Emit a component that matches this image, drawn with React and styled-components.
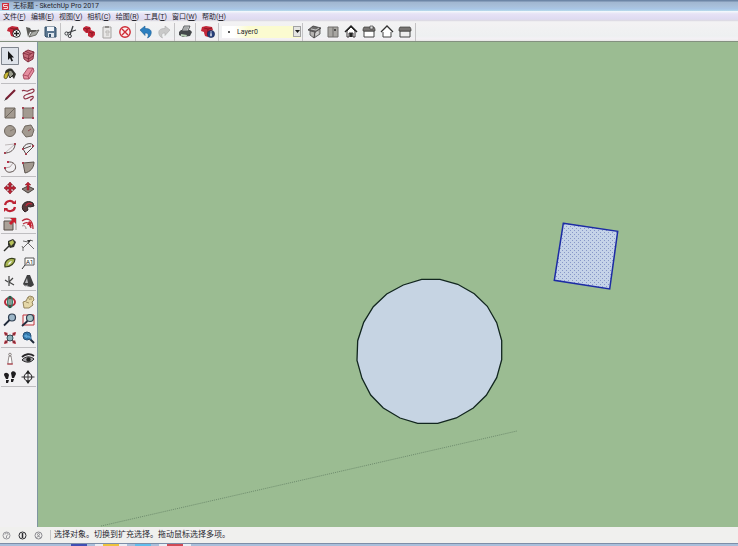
import React from "react";
import styled, { createGlobalStyle } from "styled-components";

const GlobalStyle = createGlobalStyle`
  * {
    box-sizing: border-box;
  }
  body {
    margin: 0;
    overflow: hidden;
    font-family: Roboto, "Noto Sans CJK SC", sans-serif;
    color: #26262e;
  }
  button, select {
    font: inherit;
    color: inherit;
    border: 0;
    padding: 0;
    margin: 0;
    background: none;
  }
`;

const red = "#c4283a";
const dark = "#3a3638";
const taupe = "#a39a90";

const icons = {
  // file toolbar
  newFile: (
    <>
      <path d="M3 5l4-2 6 1 1 3-4 2-1 5-3-1-1-4-3-1z" fill={red} />
      <path d="M5 5l4 1 4-1M9 6l-1 7" stroke="#7d1420" fill="none" strokeWidth=".8" />
      <path d="M5 8h3v5l-2-1z" fill={red} />
      <circle cx="11.500" cy="10.500" r="3.800" fill="#fff" stroke="#222" />
      <path d="M11.500 8v5M9 10.500h5" stroke="#222" strokeWidth="1.400" />
    </>
  ),
  open: (
    <>
      <path d="M3 4l4 1 1 2 5 0v2H7l-2 5z" fill="#5c5c58" />
      <path d="M6 14l3-5 7-2-3 5z" fill="#a9aba6" stroke="#55564f" strokeWidth=".8" />
    </>
  ),
  save: (
    <>
      <path d="M4 4h10l1 1v9H5l-1-1z" fill="#5b7690" stroke="#34506b" />
      <path d="M6 4h7v4H6z" fill="#f2f6fa" />
      <path d="M7 10h6v4H7z" fill="#dfe7ee" />
      <path d="M8 11h2v3H8z" fill="#34506b" />
    </>
  ),
  cut: (
    <>
      <path d="M11 3L8 12M14 7L5 10" stroke="#3f4246" strokeWidth="1.300" fill="none" />
      <circle cx="4.500" cy="10.500" r="1.600" fill="none" stroke="#3f4246" />
      <circle cx="7.800" cy="13" r="1.600" fill="none" stroke="#3f4246" />
    </>
  ),
  copy: (
    <>
      <path d="M3 5l3-2 4 1 1 2-2 4-3 0-3-3z" fill={red} />
      <path d="M8 8l3-1 4 2 0 3-3 3-4-2z" fill={red} />
      <path d="M4 5l3 1 3-1M7 6v3M9 9l3 1 2-1M12 10v3" stroke="#7d1420" strokeWidth=".8" fill="none" />
    </>
  ),
  paste: (
    <>
      <path d="M5 4h8v11H5z" fill="#e8e7e6" stroke="#a5a3a1" />
      <path d="M7 3h4v2H7z" fill="#8f8d8b" />
      <path d="M8 8h3v2H8zM8 12h3" fill="none" stroke="#b9b7b4" />
    </>
  ),
  erase: (
    <>
      <circle cx="9" cy="9" r="5.200" fill="#fbeeee" stroke="#cf2b35" strokeWidth="1.400" />
      <path d="M6 6l6 6M12 6l-6 6" stroke="#cf2b35" strokeWidth="1.400" />
    </>
  ),
  undo: <path d="M3 7l5-4v2.500c5 0 7 2 6 5.500-.5 2-1.500 3-3.500 4 1.500-3 1-5-2.500-5v2.500z" fill="#2c7fc0" stroke="#1f5f96" strokeWidth=".6" />,
  redo: <path d="M15 7l-5-4v2.500c-5 0-7 2-6 5.500.5 2 1.500 3 3.500 4-1.500-3-1-5 2.500-5v2.500z" fill="#c9c9c9" stroke="#adadad" strokeWidth=".6" />,
  print: (
    <>
      <path d="M3 9l2-2h9l2 2-2 4-7 1-4-2z" fill="#44474a" />
      <path d="M6 8l2-5h6l-2 5z" fill="#c9cbcb" stroke="#45484a" strokeWidth=".8" />
      <path d="M5 11l6 1-1 2-5-1z" fill="#b9d0b6" />
      <path d="M8 5h4M7 7h4" stroke="#66696b" strokeWidth=".7" />
    </>
  ),
  modelInfo: (
    <>
      <path d="M3 4l4-1 6 1 1 3-4 2-1 5-3-1-1-4-3-1z" fill={red} />
      <path d="M5 5l4 1 4-1M9 6l-1 7" stroke="#7d1420" fill="none" strokeWidth=".8" />
      <path d="M5 8h3v5l-2-1z" fill={red} />
      <circle cx="12" cy="11" r="3.600" fill="#273f7c" stroke="#15254f" strokeWidth=".6" />
      <path d="M12 8.500v1M12 10.300v3" stroke="#fff" strokeWidth="1.300" />
    </>
  ),
  // views
  iso: (
    <>
      <path d="M2 7l5-4 8 2-5 4z" fill="#6d6c6b" stroke="#3d3c3c" strokeWidth=".8" />
      <path d="M4 8v4l4 3 1-6zM9 9l-1 6 6-4V6z" fill="#b6b4b2" stroke="#4a4949" strokeWidth=".8" />
      <path d="M5 6l5 1 3-2M10 10l2-1v2l-2 1z" stroke="#ddd" strokeWidth=".8" fill="none" />
    </>
  ),
  top: (
    <>
      <path d="M4 4h10v10H4z" fill="#a8a6a2" stroke="#716f6c" />
      <path d="M9 4v10" stroke="#716f6c" />
      <path d="M10 6h2v2h-2z" fill="#4f4e4c" />
    </>
  ),
  front: (
    <>
      <path d="M5 8l4-4 4 4v6h-2v-4H7v4H5z" fill="#fff" stroke={dark} />
      <path d="M3 9l6-6 6 6" stroke="#222" strokeWidth="1.500" fill="none" />
      <path d="M7.500 10h3v4h-3z" fill="#222" />
    </>
  ),
  right: (
    <>
      <path d="M4 8h10v6H4z" fill="#fff" stroke="#444" />
      <path d="M3 6l1-2h10l1 2v2H3z" fill="#777472" stroke="#403f3e" strokeWidth=".7" />
      <path d="M10 3h3v3h-3z" fill="#ddd" stroke="#444" strokeWidth=".7" />
    </>
  ),
  back: (
    <>
      <path d="M5 8v6h8V8" fill="#fff" stroke="#444" />
      <path d="M3 9l6-6 6 6" stroke="#333" strokeWidth="1.300" fill="#fff" />
    </>
  ),
  left: (
    <>
      <path d="M4 8h10v6H4z" fill="#eee" stroke="#444" />
      <path d="M3 6l1-2h10l1 2v2H3z" fill="#777472" stroke="#403f3e" strokeWidth=".7" />
    </>
  ),
  // drawing tools
  select: <path d="M7 4v9l2-2 1.500 3.500 1.500-.7-1.500-3.300h2.500z" fill="#151515" />,
  component: (
    <>
      <path d="M4 6l5-3 6 2-1 7-5 3-4-3z" fill="#c46a78" stroke="#7c2738" strokeWidth=".9" />
      <path d="M4 6l6 2 5-3M10 8l-1 7M6 4l6 3M5 10l5 2 4-3" stroke="#7c2738" strokeWidth=".8" fill="none" />
    </>
  ),
  paint: (
    <>
      <path d="M4 8c0-4 6-6 8-3l3 4-2 5-3-4z" fill="#35352f" />
      <path d="M6 7l4-2 3 4-4 4z" fill="#9a9c8d" stroke="#272722" />
      <path d="M3 12c0-3 2-5 5-5L6 13c-1 1-3 1-3-1z" fill="#cdbb36" stroke="#4b4613" strokeWidth=".8" />
    </>
  ),
  eraser: (
    <>
      <path d="M4 10l5-7h5l1 3-5 8-5 0z" fill="#e58ea0" stroke="#a34459" strokeWidth=".9" />
      <path d="M4 10l5 1 5-8M9 11l1 3" stroke="#a34459" strokeWidth=".8" fill="none" />
    </>
  ),
  line: (
    <>
      <path d="M5 13l9-9" stroke="#7a1f33" strokeWidth="2.200" />
      <path d="M3 15l2-3 1 1z" fill="#222" />
    </>
  ),
  freehand: <path d="M3 5c2-2 4 1 6 0s5-3 6-1-3 3-6 4-5 2-4 4 4 0 6-1 4-1 3 1-3 1-2 3" stroke="#8e2f43" strokeWidth="1.200" fill="none" />,
  rectangle: (
    <>
      <path d="M4 4h10v10H4z" fill={taupe} stroke="#6f675f" />
      <path d="M4 14L14 4" stroke="#6f675f" />
    </>
  ),
  rotatedRect: (
    <>
      <path d="M4 4h10v10H4z" fill={taupe} stroke="#7c716a" />
      <path d="M3 3h2v2H3zM13 3h2v2h-2zM3 13h2v2H3zM13 13h2v2h-2z" fill="#a44352" />
    </>
  ),
  circle: (
    <>
      <circle cx="9" cy="9" r="5.500" fill={taupe} stroke="#6f675f" />
      <path d="M9 9l4-2" stroke="#7f766d" />
    </>
  ),
  polygon: (
    <>
      <path d="M6 4l6-1 3 5-2 6-6 1-4-5z" fill={taupe} stroke="#6f675f" />
      <path d="M9 9l3-2" stroke="#8c4a50" />
    </>
  ),
  arc: (
    <>
      <path d="M4 13C9 13 14 10 14 4" stroke="#5f5350" fill="none" />
      <path d="M4 13L14 4M4 5l9-1" stroke="#a9a1a0" fill="none" strokeWidth=".7" />
      <path d="M3 12h2v2H3zM13 3h2v2h-2z" fill="#a44352" />
    </>
  ),
  arc2: (
    <>
      <path d="M4 9c1-6 9-7 11-3M4 9l3 5 8-8M4 9l8-3" stroke="#544b4a" fill="none" />
      <path d="M3 8h2v2H3zM6 13h2v2H6zM13 5h2v2h-2z" fill="#a44352" />
    </>
  ),
  arc3: (
    <>
      <path d="M7 4c9-1 10 9 3 10-3 1-6-1-6-4" stroke="#5f5350" fill="none" />
      <path d="M4 10l5-1 3-4" stroke="#b3a6a6" fill="none" />
      <path d="M3 9h2v2H3zM6 3h2v2H6z" fill="#b5344b" />
    </>
  ),
  pie: (
    <>
      <path d="M4 5l11-1c0 6-4 10-9 11z" fill={taupe} stroke="#5b534d" />
      <path d="M3 4h2v2H3z" fill="#a44352" />
    </>
  ),
  // edit tools
  move: (
    <path d="M9 3l2.500 3h-1.500v2h2V6.500l3 2.500-3 2.500V10h-2v2h1.500L9 15l-2.500-3H8v-2H6v1.500L3 9l3-2.500V8h2V6H6.500z" fill="#bd2334" stroke="#7c1422" strokeWidth=".6" />
  ),
  pushPull: (
    <>
      <path d="M3 10l6-3 6 3-6 4z" fill="#8b7f79" stroke="#4c4340" />
      <path d="M9 3l3 3h-2v5H8V6H6z" fill="#bd2334" stroke="#7c1422" strokeWidth=".4" />
    </>
  ),
  rotate: (
    <>
      <path d="M4 8c1-5 7-5 9-2M14 10c-1 5-7 5-9 2" stroke="#bd2334" strokeWidth="2.200" fill="none" />
      <path d="M11 7h4V3zM7 11H3v4z" fill="#bd2334" />
    </>
  ),
  followMe: (
    <>
      <path d="M4 13c-3-6 4-11 10-7l1 3-4 1c-2-1-3 0-2 3l-3 2z" fill="#553a3c" stroke="#2f2022" />
      <path d="M7 9c1-3 4-3 6-2" stroke="#c0273b" strokeWidth="1.300" fill="none" />
    </>
  ),
  scale: (
    <>
      <path d="M3 6h9v9H3z" fill="#aba298" stroke="#574f49" />
      <path d="M3 3h12v12" stroke="#8f8580" fill="none" strokeWidth=".8" />
      <path d="M9 3h6v6l-2-2-3 3-2-2 3-3z" fill="#c8202f" />
    </>
  ),
  offset: (
    <>
      <path d="M3 6c5-4 11-2 11 8M4 9c4-3 7-1 8 4" stroke="#b92b3b" strokeWidth="1.300" fill="none" />
      <path d="M8 10l2-4 3 2-1 1 1 2-2 1-1-2z" fill="#c8202f" />
      <path d="M3 11c2-1 4 0 4 3" stroke="#9b8985" fill="none" />
    </>
  ),
  // construction tools
  tape: (
    <>
      <path d="M7 5l5-2 3 3-2 5-4 1-2-3z" fill="#33352c" />
      <path d="M8 6l4-2 1 3-3 3z" fill="#b8c25a" />
      <path d="M8 10l-5 5" stroke="#2d2d28" strokeWidth="1.400" />
    </>
  ),
  dimension: (
    <>
      <path d="M4 12l7-7M4 5l5 1M9 7l6 6M11 4l3 1M4 12v3M4 12l-1-2" stroke="#5c5c5c" fill="none" strokeWidth=".9" />
      <path d="M8 4l4 0-2 3z" fill="#333" />
    </>
  ),
  protractor: (
    <>
      <path d="M4 13C3 7 8 3 14 5c0 4-4 8-10 8z" fill="#a9b653" stroke="#39401d" strokeWidth="1.200" />
      <path d="M7 11c0-2 2-4 4-4-1 2-2 3-4 4z" fill="#f2f1f2" />
    </>
  ),
  textTool: (
    <>
      <path d="M6 4h9v7H6z" fill="#fff" stroke="#555" />
      <path d="M6 11l-3 4" stroke="#333" />
      <text x="7" y="10" fontSize="6" fill="#222">A1</text>
    </>
  ),
  axes: <path d="M8 4v10M8 10l4-4M8 10l5 3M4 8l3 2" stroke="#454545" strokeWidth="1.200" fill="none" />,
  text3d: (
    <>
      <path d="M8 3l3 0 4 10-3 2-5-1-3-2z" fill="#3f3f41" />
      <path d="M8 6l1 5H6z" fill="#b7b7ba" />
      <path d="M4 12l2 2 3-1" stroke="#8b8b8e" fill="none" />
    </>
  ),
  // camera tools
  orbit: (
    <>
      <ellipse cx="9" cy="9" rx="5" ry="4" fill="none" stroke="#b82939" strokeWidth="2" />
      <ellipse cx="9" cy="9" rx="2.200" ry="5.500" fill="none" stroke="#2a735d" strokeWidth="1.500" />
      <path d="M9 3v12" stroke="#263e34" />
    </>
  ),
  pan: (
    <>
      <path d="M4 9l3-1 2-4 2-1 3 1 1 3-2 2 1 3-4 3-5 0z" fill="#e5d7a8" stroke="#8b7b52" strokeWidth=".9" />
      <path d="M9 4l2 3M12 4l0 3M7 9l3 1" stroke="#8b7b52" strokeWidth=".7" fill="none" />
    </>
  ),
  zoom: (
    <>
      <circle cx="11" cy="6.500" r="3.500" fill="#9db6c8" stroke="#2f3e51" strokeWidth="1.200" />
      <path d="M8.500 9L3 14.500" stroke="#20293a" strokeWidth="1.800" />
    </>
  ),
  zoomWindow: (
    <>
      <path d="M4 4h11v10H4z" fill="#f8f1f1" stroke="#c1343c" />
      <circle cx="11" cy="7" r="3.500" fill="#a7c5c6" stroke="#2f3e51" strokeWidth="1.200" />
      <path d="M8.500 10L3 15" stroke="#20293a" strokeWidth="1.800" />
    </>
  ),
  zoomExtents: (
    <>
      <path d="M3 3l4 1-3 3zM15 3l-4 1 3 3zM3 15l4-1-3-3zM15 15l-4-1 3-3z" fill="#bd2334" />
      <path d="M4 4l10 10M14 4L4 14" stroke="#813039" strokeWidth="1.500" />
      <circle cx="9" cy="9" r="3" fill="#8fb1b9" stroke="#2f4f5b" />
    </>
  ),
  previous: (
    <>
      <circle cx="8" cy="7" r="4" fill="#3a82b6" stroke="#244e74" />
      <path d="M11 10l4 4" stroke="#20293a" strokeWidth="2" />
      <path d="M4 7l4-3v2c3 0 5 2 4 5-1-2-2-2-4-2v1z" fill="#5ba4d6" stroke="#1e578c" strokeWidth=".6" />
    </>
  ),
  // walkthrough tools
  positionCamera: (
    <>
      <path d="M8 6l-1 6v2h4v-2l-1-6z" fill="#fff" stroke="#77706e" strokeWidth=".8" />
      <circle cx="9" cy="4.500" r="1.300" fill="#eee" stroke="#77706e" strokeWidth=".8" />
      <path d="M6 14h6" stroke="#b6303d" />
    </>
  ),
  lookAround: (
    <>
      <path d="M3 7c3-3 8-4 12-1" stroke="#272528" strokeWidth="1.800" fill="none" />
      <path d="M3 10c3-4 9-4 12-1-3 4-8 4-12 1z" fill="#a5a4a8" stroke="#272528" />
      <circle cx="9.500" cy="9.500" r="2.200" fill="#222" />
    </>
  ),
  walk: (
    <>
      <path d="M3 7c0-3 4-3 5 0l-1 4H5zM5 12h3l-1 3H5z" fill="#1f1d20" />
      <path d="M10 5c1-3 5-2 5 1l-2 4h-2zM10 11h3l-1 3h-2z" fill="#1f1d20" />
    </>
  ),
  section: (
    <>
      <circle cx="9" cy="9" r="3.800" fill="#f4f4f5" stroke="#343235" strokeWidth="1.200" />
      <path d="M2.500 9h13M9 3v12" stroke="#343235" />
      <path d="M7 5l2-3 2 3zM7 13l2 3 2-3z" fill="#222" />
    </>
  ),
};

const menus = [
  ["文件", "F"],
  ["编辑", "E"],
  ["视图", "V"],
  ["相机", "C"],
  ["绘图", "R"],
  ["工具", "T"],
  ["窗口", "W"],
  ["帮助", "H"],
];

const toolbarGroups = [
  ["newFile", "open", "save"],
  ["cut", "copy", "paste", "erase"],
  ["undo", "redo"],
  ["print"],
  ["modelInfo"],
];

const views = ["iso", "top", "front", "right", "back", "left"];

const toolGroups = [
  ["select", "component", "paint", "eraser"],
  ["line", "freehand", "rectangle", "rotatedRect", "circle", "polygon", "arc", "arc2", "arc3", "pie"],
  ["move", "pushPull", "rotate", "followMe", "scale", "offset"],
  ["tape", "dimension", "protractor", "textTool", "axes", "text3d"],
  ["orbit", "pan", "zoom", "zoomWindow", "zoomExtents", "previous"],
  ["positionCamera", "lookAround", "walk", "section"],
];

const circlePoints =
  "383.7,237.3 402,237.3 419.7,242.3 436.3,251.7 449.3,264.3 458.7,280.7 463.7,298.7 463.7,317.7 " +
  "458.7,335.7 448.3,353.3 435.3,366 418.3,376 399.7,381.3 379.7,381.3 362,376 345.3,366 " +
  "332.7,353 324,336.3 319,318.3 319.7,298.7 325.7,280.3 335.3,264.7 348.7,252 365.3,243";

function Tool({ name, active }) {
  return (
    <ToolButton type="button" aria-label={name} $active={active}>
      <svg width="18" height="18" viewBox="0 0 18 18">
        {icons[name]}
      </svg>
    </ToolButton>
  );
}

export default function App() {
  return (
    <Window>
      <GlobalStyle />
      <TitleBar>
        <svg width="9" height="9" viewBox="0 0 9 9">
          <path d="M1 1h7v7H1z" fill="#cf2f3d" />
          <path d="M6.500 2.500h-4v2h4v2h-4" stroke="#f7d5d8" fill="none" />
        </svg>
        无标题 - SketchUp Pro 2017
      </TitleBar>
      <MenuBar>
        {menus.map(([label, key]) => (
          <MenuItem type="button" key={key}>
            {label}(<u>{key}</u>)
          </MenuItem>
        ))}
      </MenuBar>
      <Toolbar>
        {toolbarGroups.map((group, i) => (
          <Group key={i} $wide={i > 2}>
            {group.map((name) => (
              <Tool key={name} name={name} />
            ))}
          </Group>
        ))}
        <Group $wide>
          <LayerBox>
            <Bullet />
            <LayerSelect aria-label="Layer" defaultValue="Layer0">
              <option>Layer0</option>
            </LayerSelect>
            <Arrow>
              <svg width="5" height="3" viewBox="0 0 5 3">
                <path d="M0 0h5L2.500 3z" fill="#1d1d1d" />
              </svg>
            </Arrow>
          </LayerBox>
        </Group>
        <Group>
          {views.map((name) => (
            <Tool key={name} name={name} />
          ))}
        </Group>
      </Toolbar>
      <Main>
        <Toolbox>
          {toolGroups.map((group, i) => (
            <ToolGrid key={i}>
              {group.map((name) => (
                <Tool key={name} name={name} active={name === "select"} />
              ))}
            </ToolGrid>
          ))}
        </Toolbox>
        <Canvas>
          <defs>
            <pattern id="dots" width="4" height="4" patternUnits="userSpaceOnUse">
              <path d="M0 0h1v1H0zM2 2h1v1H2z" fill="#8797c8" />
            </pattern>
          </defs>
          <path d="M63 484L479 389" stroke="#6d8b6c" strokeDasharray="1 1" />
          <polygon points={circlePoints} fill="#c6d4e3" stroke="#12261f" strokeWidth="1.300" />
          <polygon points="525.3,181.3 579.7,189.3 571.7,247 516.3,238.3" fill="#c5d3e8" />
          <polygon
            points="525.3,181.3 579.7,189.3 571.7,247 516.3,238.3"
            fill="url(#dots)"
            stroke="#1c2ba4"
            strokeWidth="1.500"
          />
        </Canvas>
      </Main>
      <StatusBar>
        <StatusIcon $color="#96969a" viewBox="0 0 9 9">
          <circle cx="4.500" cy="4.500" r="3.500" />
          <path d="M3 3.500c0-2 3-2 3 0L4.500 5v2" />
        </StatusIcon>
        <StatusIcon $color="#2c2c30" viewBox="0 0 9 9">
          <circle cx="4.500" cy="4.500" r="3.500" />
          <path d="M4.500 2v5" strokeWidth="1.500" />
        </StatusIcon>
        <StatusIcon $color="#8b8b90" viewBox="0 0 9 9">
          <circle cx="4.500" cy="4.500" r="3.500" />
          <circle cx="4.500" cy="3.500" r="1" />
          <path d="M2.500 7c0-2 4-2 4 0" />
        </StatusIcon>
        <Message>选择对象。切换到扩充选择。拖动鼠标选择多项。</Message>
      </StatusBar>
      <Taskbar>
        <Task $color="#3f4fb4" />
        <Task $color="#edc23c" $open />
        <Task $color="#62bdec" />
        <Task $color="#cf4a55" $open />
      </Taskbar>
    </Window>
  );
}

const Window = styled.div`
  display: flex;
  flex-direction: column;
  height: 100vh;
  background: #f1f0f2;
`;

const TitleBar = styled.header`
  display: flex;
  align-items: center;
  gap: 3px;
  height: 11px;
  padding: 1px 0 0 1px;
  font-size: 7px;
  line-height: 10px;
  background: linear-gradient(#6d86a6 0 1px, #a1b6d0 2px, #a9c2dd 7px, #a9c6e8 9px, #b8dcea);
`;

const MenuBar = styled.nav`
  display: flex;
  gap: 5px;
  height: 11px;
  padding-left: 3px;
  background: linear-gradient(#f4fbfd, #e6e2f5 3px, #dfdbf1 8px, #dddbe0 10px, #fff 11px);
`;

const MenuItem = styled.button`
  min-width: 23px;
  font-size: 7px;
  line-height: 10px;
  white-space: nowrap;
  text-align: left;
`;

const Toolbar = styled.div`
  display: flex;
  align-items: center;
  height: 20px;
  padding-left: 5px;
  background: linear-gradient(#f3f2f3, #eef0f1 14px, #f4f1f5 17px, #e7e7e5);
  border-bottom: 1px solid #83907f;
`;

const Group = styled.div`
  display: flex;
  align-items: center;
  height: 18px;
  padding-right: 1px;
  margin-right: ${({ $wide }) => ($wide ? "3px" : "1px")};
  border-right: 1px solid #c4c3c5;
`;

const ToolButton = styled.button`
  display: flex;
  width: 18px;
  height: 18px;
  border-radius: 1px;
  background: ${({ $active }) => ($active ? "#dfe3ea" : "none")};
  box-shadow: ${({ $active }) => ($active ? "inset 0 0 0 1px #80858e" : "none")};
`;

const LayerBox = styled.div`
  display: flex;
  align-items: center;
  width: 79px;
  height: 12px;
  padding-left: 6px;
  background: linear-gradient(90deg, #fff 12px, #fbfbd0 26px);
`;

const Bullet = styled.span`
  width: 2px;
  height: 2px;
  margin-right: 7px;
  border-radius: 1px;
  background: #222;
`;

const LayerSelect = styled.select`
  flex: 1;
  min-width: 0;
  appearance: none;
  font-size: 7px;
  line-height: 10px;
`;

const Arrow = styled.span`
  display: flex;
  align-items: center;
  justify-content: center;
  width: 8px;
  height: 11px;
  border: 1px solid #a2a2a2;
  background: #e4e4e2;
  pointer-events: none;
`;

const Main = styled.main`
  display: flex;
  flex: 1;
  min-height: 0;
`;

const Toolbox = styled.aside`
  width: 38px;
  padding: 5px 1px 0;
  border-right: 1px solid #7f95a0;
`;

const ToolGrid = styled.div`
  display: grid;
  grid-template-columns: 18px 18px;
  margin-bottom: 2px;
  border-bottom: 1px solid #bfbec1;
`;

const Canvas = styled.svg`
  flex: 1;
  min-width: 0;
  height: 100%;
  background: #9bbc92;
`;

const StatusBar = styled.footer`
  display: flex;
  align-items: center;
  gap: 7px;
  height: 16px;
  padding-left: 2px;
  background: #f0f0ee;
`;

const StatusIcon = styled.svg`
  width: 9px;
  height: 9px;
  fill: none;
  stroke: ${({ $color }) => $color};
`;

const Message = styled.span`
  padding-left: 3px;
  border-left: 1px solid #c6c6c6;
  font-size: 8px;
  line-height: 10px;
`;

const Taskbar = styled.div`
  display: flex;
  height: 3px;
  padding-left: 63px;
  border-top: 1px solid #7d8ea8;
  background: #a9bfdb;
`;

const Task = styled.span`
  display: flex;
  width: 32px;
  padding: 0 8px;
  background: ${({ $open }) => ($open ? "#e9edf3" : "none")};

  &::before {
    content: "";
    flex: 1;
    background: ${({ $color }) => $color};
  }
`;
